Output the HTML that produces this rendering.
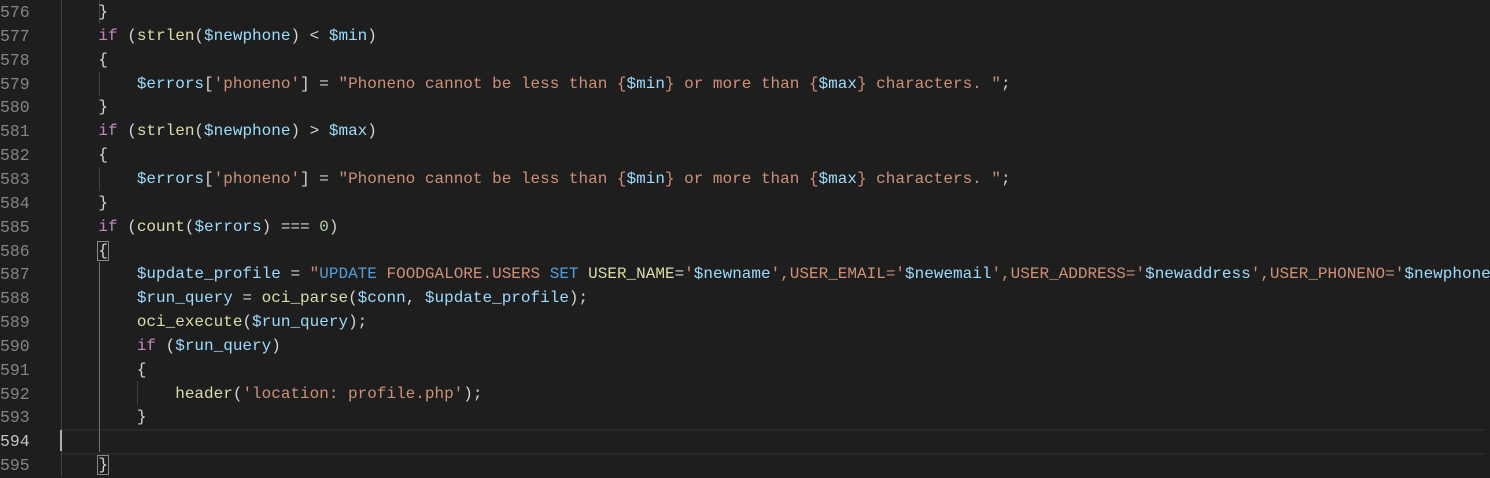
<!DOCTYPE html><html><head><style>
body{margin:0;width:1490px;height:477px;background:#1e1e1e;overflow:hidden;position:relative;font-family:"Liberation Mono",monospace;font-size:16px}
.l{position:absolute;left:0;height:23.85px;line-height:23.85px;white-space:pre;width:1490px;margin-top:1px}
.n{position:absolute;left:0;width:27px;text-align:right;color:#858585;font-size:16.5px}
.c{position:absolute;left:60px;color:#d4d4d4}
.k{color:#c586c0}.v{color:#9cdcfe}.f{color:#dcdcaa}.s{color:#ce9178}.b{color:#569cd6}.m{color:#b5cea8}.w{color:#d4d4d4}
.g{position:absolute;width:1px;background:#404040}
.cur{position:absolute;left:61px;right:6px;top:429px;height:22px;border-top:2px solid #282828;border-bottom:2px solid #282828}
.box{outline:1px solid #888;}
</style></head><body>
<div class="cur"></div>
<div class="g" style="left:61px;top:0;height:477px"></div>
<div class="g" style="left:99px;top:0;height:24px"></div>
<div class="g" style="left:99px;top:72px;height:24px"></div>
<div class="g" style="left:99px;top:167px;height:24px"></div>
<div class="g" style="left:99px;top:262px;height:190px;background:#707070"></div>
<div class="g" style="left:137px;top:381px;height:24px"></div>
<div class="g" style="left:60px;top:430px;height:21px;width:2px;background:#aeafad"></div>
<div class="l" style="top:0"><span class="n">576</span><span class="c">    }</span></div>
<div class="l" style="top:23.85px"><span class="n">577</span><span class="c">    <span class="k">if</span> (<span class="f">strlen</span>(<span class="v">$newphone</span>) &lt; <span class="v">$min</span>)</span></div>
<div class="l" style="top:47.7px"><span class="n">578</span><span class="c">    {</span></div>
<div class="l" style="top:71.55px"><span class="n">579</span><span class="c">        <span class="v">$errors</span>[<span class="s">'phoneno'</span>] = <span class="s">"Phoneno cannot be less than {<span class="v">$min</span>} or more than {<span class="v">$max</span>} characters. "</span>;</span></div>
<div class="l" style="top:95.4px"><span class="n">580</span><span class="c">    }</span></div>
<div class="l" style="top:119.25px"><span class="n">581</span><span class="c">    <span class="k">if</span> (<span class="f">strlen</span>(<span class="v">$newphone</span>) &gt; <span class="v">$max</span>)</span></div>
<div class="l" style="top:143.1px"><span class="n">582</span><span class="c">    {</span></div>
<div class="l" style="top:166.95px"><span class="n">583</span><span class="c">        <span class="v">$errors</span>[<span class="s">'phoneno'</span>] = <span class="s">"Phoneno cannot be less than {<span class="v">$min</span>} or more than {<span class="v">$max</span>} characters. "</span>;</span></div>
<div class="l" style="top:190.8px"><span class="n">584</span><span class="c">    }</span></div>
<div class="l" style="top:214.65px"><span class="n">585</span><span class="c">    <span class="k">if</span> (<span class="f">count</span>(<span class="v">$errors</span>) === <span class="m">0</span>)</span></div>
<div class="l" style="top:238.5px"><span class="n">586</span><span class="c">    <span class="box">{</span></span></div>
<div class="l" style="top:262.35px"><span class="n">587</span><span class="c">        <span class="v">$update_profile</span> = <span class="s">"</span><span class="b">UPDATE</span> <span class="s">FOODGALORE.USERS</span> <span class="b">SET</span> <span class="f">USER_NAME</span>=<span class="s">'</span><span class="v">$newname</span><span class="s">',USER_EMAIL=</span><span class="s">'</span><span class="v">$newemail</span><span class="s">',USER_ADDRESS=</span><span class="s">'</span><span class="v">$newaddress</span><span class="s">',USER_PHONENO=</span><span class="s">'</span><span class="v">$newphone</span></span></div>
<div class="l" style="top:286.2px"><span class="n">588</span><span class="c">        <span class="v">$run_query</span> = <span class="f">oci_parse</span>(<span class="v">$conn</span>, <span class="v">$update_profile</span>);</span></div>
<div class="l" style="top:310.05px"><span class="n">589</span><span class="c">        <span class="f">oci_execute</span>(<span class="v">$run_query</span>);</span></div>
<div class="l" style="top:333.9px"><span class="n">590</span><span class="c">        <span class="k">if</span> (<span class="v">$run_query</span>)</span></div>
<div class="l" style="top:357.75px"><span class="n">591</span><span class="c">        {</span></div>
<div class="l" style="top:381.6px"><span class="n">592</span><span class="c">            <span class="f">header</span>(<span class="s">'location: profile.php'</span>);</span></div>
<div class="l" style="top:405.45px"><span class="n">593</span><span class="c">        }</span></div>
<div class="l" style="top:429.3px"><span class="n" style="color:#c6c6c6">594</span></div>
<div class="l" style="top:453.15px"><span class="n">595</span><span class="c">    <span class="box">}</span></span></div>
</body></html>
